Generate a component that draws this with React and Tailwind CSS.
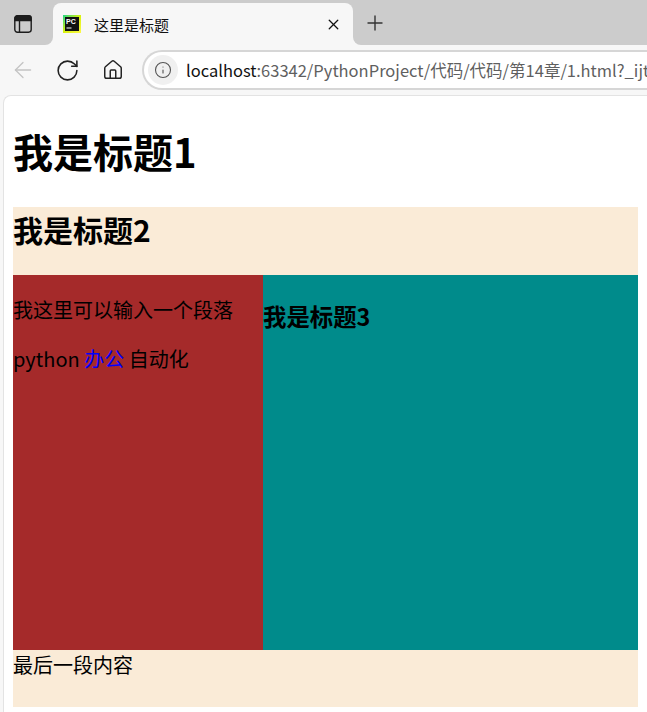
import React from 'react';
import { X, Plus, ArrowLeft, RotateCw, House, Info } from 'lucide-react';

const cjk = "font-['Noto_Sans_CJK_SC','Noto_Sans',sans-serif]";

function PcIcon() {
  return (
    <svg width="18" height="18" viewBox="0 0 18 18">
      <defs>
        <linearGradient id="pc" x1="0" y1="0" x2="1" y2="1">
          <stop offset="0" stopColor="#21d789" />
          <stop offset="0.5" stopColor="#d9f20f" />
          <stop offset="1" stopColor="#fcf84a" />
        </linearGradient>
      </defs>
      <rect width="18" height="18" fill="url(#pc)" />
      <rect x="2" y="2" width="14" height="14" fill="#111" />
      <text x="3" y="9" fontSize="7" fontWeight="700" fill="#fff" fontFamily="Liberation Sans">PC</text>
      <rect x="3.5" y="12.5" width="5" height="1" fill="#fff" />
    </svg>
  );
}

function TabsIcon() {
  return (
    <svg width="18" height="18" viewBox="0 0 18 18" fill="none" stroke="#1c1c1c" strokeWidth="1.4">
      <rect x="0.8" y="0.8" width="16.4" height="16.4" rx="2.6" />
      <path d="M1 3.2a2.2 2.2 0 0 1 2.2-2.2h11.6a2.2 2.2 0 0 1 2.2 2.2v2.3H1z" fill="#1c1c1c" />
      <path d="M5.5 5.5v11.5" />
    </svg>
  );
}

export default function App() {
  return (
    <div className={`h-[712px] w-[647px] overflow-hidden bg-[#f7f7f7] ${cjk}`}>
      {/* tab strip */}
      <div className="flex h-[45px]">
        <div className="flex w-[53px] items-center justify-center rounded-br-lg bg-[#cccccc] pr-[7px] pt-[3px]">
          <TabsIcon />
        </div>
        <div className="w-[300px] bg-[#cccccc] pt-[3px]">
          <div className="flex h-[42px] items-center rounded-t-lg bg-[#f7f7f7] pl-[10px] pr-[11px]">
            <PcIcon />
            <span className="ml-[13px] flex-1 text-[15px] leading-none text-[#111]">这里是标题</span>
            <X className="h-[17px] w-[17px] text-[#111]" strokeWidth={1.8} />
          </div>
        </div>
        <div className="flex flex-1 items-center rounded-bl-lg bg-[#cccccc] pl-[10px]">
          <Plus className="h-[24px] w-[24px] text-[#333]" strokeWidth={1.4} />
        </div>
      </div>

      {/* toolbar */}
      <div className="flex h-[50px] items-center">
        <ArrowLeft className="ml-[10px] h-[26px] w-[26px] text-[#c4c4c4]" strokeWidth={1.2} />
        <RotateCw className="ml-[19px] h-[25px] w-[25px] text-[#222]" strokeWidth={1.5} />
        <House className="ml-[22px] h-[22px] w-[22px] text-[#222]" strokeWidth={1.6} />
        <div className="ml-[18px] flex h-[40px] min-w-0 flex-1 items-center overflow-hidden whitespace-nowrap rounded-l-[20px] border-2 border-r-0 border-[#d6d6d6] bg-white pl-[4px] text-[16.5px]">
          <div className="flex h-[30px] w-[30px] shrink-0 items-center justify-center rounded-full bg-[#f0f0f0]">
            <Info className="h-[18px] w-[18px] text-[#555]" strokeWidth={1.5} />
          </div>
          <span className="ml-[8px] text-[#111]">localhost</span>
          <span className="text-[#5f5f5f]">:63342/PythonProject/代码/代码/第14章/1.html?_ijt=</span>
        </div>
      </div>

      {/* page */}
      <div className="ml-[3px] h-[617px] rounded-tl-lg border-l border-t border-[#e3e3e3] bg-white pl-[9px] pr-[9px] text-[20px] text-black">
        <h1 className="mb-[27px] pt-[26px] text-[40px] font-bold leading-[58px]">我是标题1</h1>
        <div className="h-[68px] bg-[#faebd7] pt-[1px]">
          <h2 className="text-[30px] font-bold leading-[43px]">我是标题2</h2>
        </div>
        <div className="flex h-[375px]">
          <div className="w-[250px] bg-[#a52a2a]">
            <p className="mt-[20px] leading-[29px]">我这里可以输入一个段落</p>
            <p className="mt-[20px] leading-[29px]">python <a className="text-[#0000ff]">办公</a> 自动化</p>
          </div>
          <div className="flex-1 bg-[#008b8b]">
            <h3 className="mt-[24px] text-[23.4px] font-bold leading-[34px]">我是标题3</h3>
          </div>
        </div>
        <div className="h-[57px] bg-[#faebd7] leading-[29px]">最后一段内容</div>
      </div>
    </div>
  );
}
